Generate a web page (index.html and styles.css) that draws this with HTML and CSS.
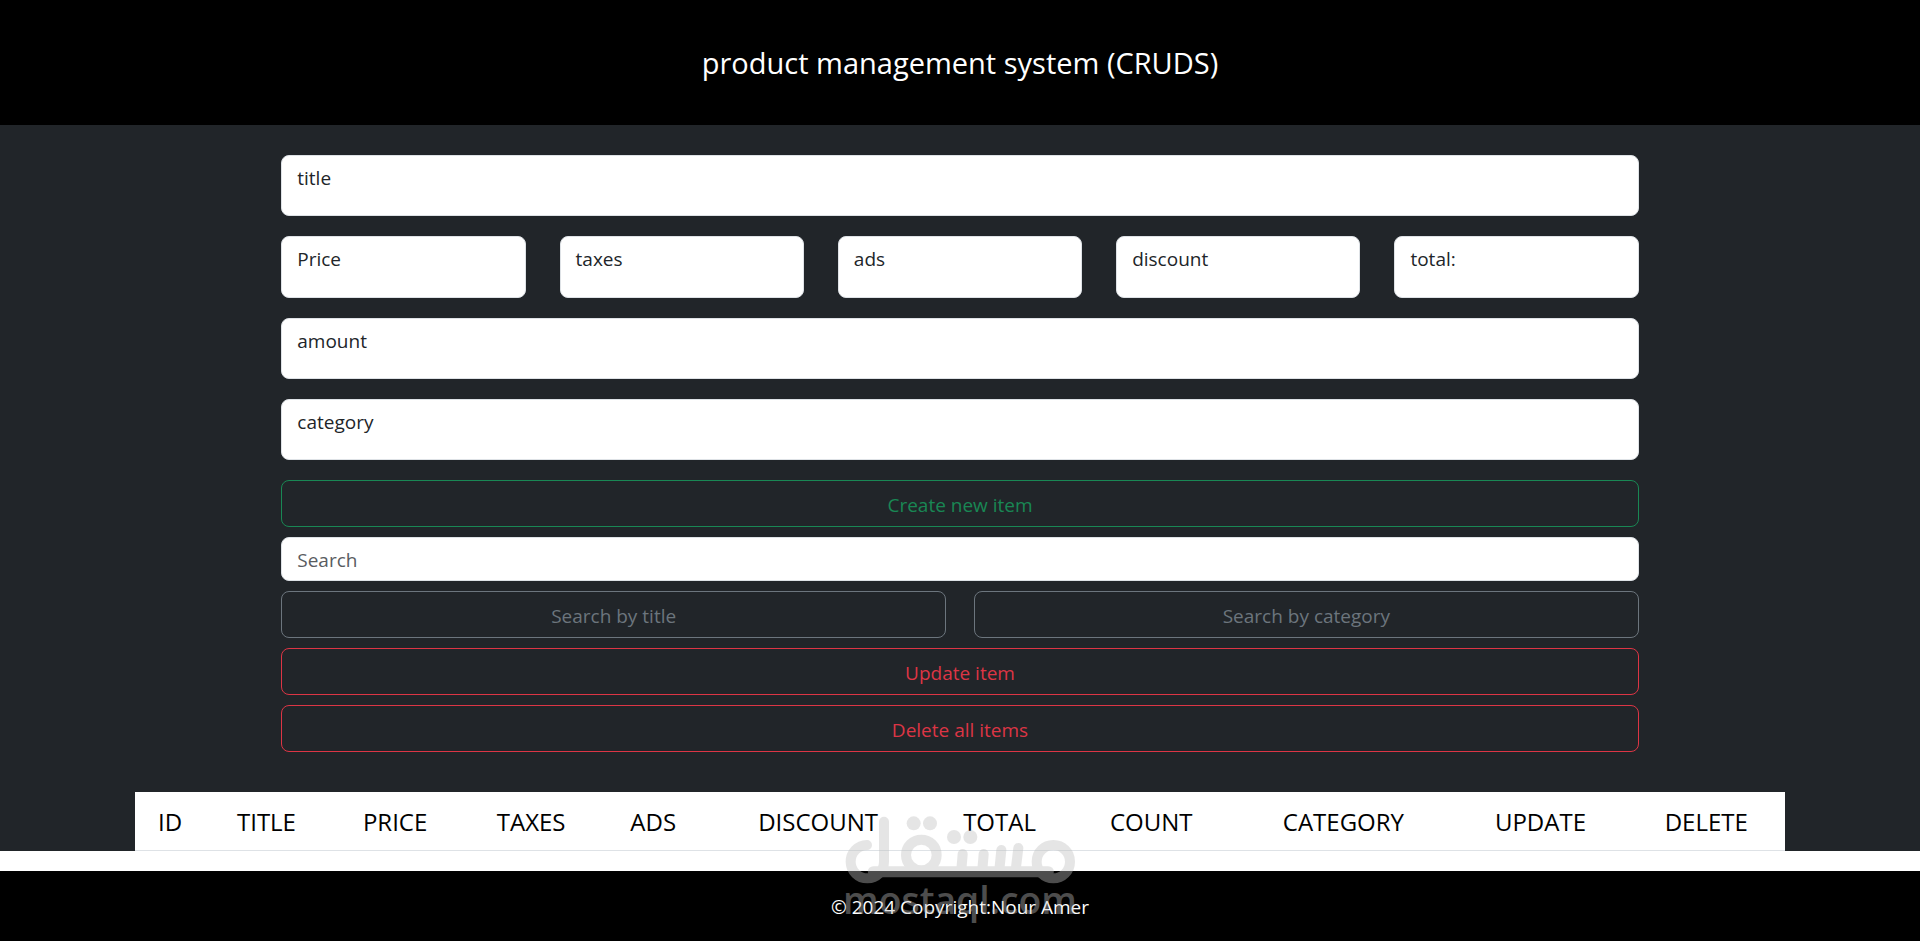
FILE: index.html
```html
<!DOCTYPE html>
<html lang="en">
<head>
    <meta charset="UTF-8">
    <meta name="viewport" content="width=device-width, initial-scale=1.0">
    <title>product management system (CRUDS)</title>
    <link rel="stylesheet" href="styles.css">
</head>
<body>
    <header class="page-header">
        <h1>product management system (CRUDS)</h1>
    </header>

    <main class="panel">
        <form class="product-form">
            <div class="field">
                <label for="title">title</label>
                <input type="text" id="title">
            </div>
            <div class="price-row">
                <div class="field">
                    <label for="price">Price</label>
                    <input type="text" id="price">
                </div>
                <div class="field">
                    <label for="taxes">taxes</label>
                    <input type="text" id="taxes">
                </div>
                <div class="field">
                    <label for="ads">ads</label>
                    <input type="text" id="ads">
                </div>
                <div class="field">
                    <label for="discount">discount</label>
                    <input type="text" id="discount">
                </div>
                <div class="field">
                    <label for="total">total:</label>
                    <input type="text" id="total" readonly>
                </div>
            </div>
            <div class="field">
                <label for="amount">amount</label>
                <input type="text" id="amount">
            </div>
            <div class="field">
                <label for="category">category</label>
                <input type="text" id="category">
            </div>

            <div class="actions">
                <button type="button" class="btn btn-success">Create new item</button>
                <input type="search" class="search" id="search" placeholder="Search" aria-label="Search">
                <div class="search-buttons">
                    <button type="button" class="btn btn-secondary">Search by title</button>
                    <button type="button" class="btn btn-secondary">Search by category</button>
                </div>
                <button type="button" class="btn btn-danger">Update item</button>
                <button type="button" class="btn btn-danger">Delete all items</button>
            </div>
        </form>

        <table class="products">
            <colgroup>
                <col class="col-id">
                <col class="col-title">
                <col class="col-price">
                <col class="col-taxes">
                <col class="col-ads">
                <col class="col-discount">
                <col class="col-total">
                <col class="col-count">
                <col class="col-category">
                <col class="col-update">
                <col class="col-delete">
            </colgroup>
            <thead>
                <tr>
                    <th>ID</th>
                    <th>TITLE</th>
                    <th>PRICE</th>
                    <th>TAXES</th>
                    <th>ADS</th>
                    <th>DISCOUNT</th>
                    <th>TOTAL</th>
                    <th>COUNT</th>
                    <th>CATEGORY</th>
                    <th>UPDATE</th>
                    <th>DELETE</th>
                </tr>
            </thead>
            <tbody id="tbody"></tbody>
        </table>
    </main>

    <footer class="page-footer">
        <p>© 2024 Copyright:Nour Amer</p>
        <!-- mostaql watermark -->
        <svg class="watermark" viewBox="435 105 690 330" aria-hidden="true">
            <g class="mark-lines">
                <path d="M501 195A50 50 0 1 0 552 245V125"/>
                <circle cx="664" cy="225" r="46"/>
                <circle cx="1060" cy="245" r="50"/>
                <path class="mark-bar" d="M520 275H1045"/>
                <path d="M788 222L784 270M851 222L847 270M904 210L898 270M955 204L947 270"/>
            </g>
            <g class="mark-dots">
                <circle cx="641" cy="130" r="21"/>
                <circle cx="690" cy="130" r="21"/>
                <circle cx="762" cy="171" r="21"/>
                <circle cx="811" cy="171" r="21"/>
            </g>
            <text class="mark-text" x="780" y="402" text-anchor="middle">mostaql.com</text>
        </svg>
    </footer>
</body>
</html>
```

FILE: styles.css
```css
* {
    box-sizing: border-box;
}

body {
    margin: 0;
    background-color: #fff;
    color: #212529;
    font-family: "Segoe UI", "Open Sans", sans-serif;
    font-size: 19px;
    line-height: 30px;
}

.page-header {
    padding: 40px 20px;
    background-color: #000;
    color: #fff;
    text-align: center;
}

.page-header h1 {
    margin: 0;
    font-size: 29px;
    font-weight: 400;
    line-height: 45px;
}

.panel {
    padding-top: 30px;
    background-color: #212529;
}

.product-form {
    display: flex;
    flex-direction: column;
    gap: 20px;
    width: 70.7%;
    margin: 0 auto 40px;
}

/* Fields */
.field {
    display: flex;
    flex-direction: column;
    height: 61px;
    padding: 7px 15px;
    background-color: #fff;
    border: 1px solid #dee2e6;
    border-radius: 8px;
}

.field input {
    width: 100%;
    height: 15px;
    padding: 0;
    border: 0;
    outline: 0;
    background: transparent;
    font: inherit;
}

.price-row {
    display: grid;
    grid-template-columns: repeat(5, 1fr);
    gap: 34px;
}

.price-row .field {
    height: 62px;
}

/* Buttons and search */
.actions {
    display: flex;
    flex-direction: column;
    gap: 10px;
}

.search-buttons {
    display: grid;
    grid-template-columns: 1fr 1fr;
    gap: 28px;
}

.btn {
    height: 47px;
    padding: 8px 15px 6px;
    background-color: transparent;
    border: 1px solid;
    border-radius: 8px;
    font: inherit;
    cursor: pointer;
}

.btn-success {
    color: #198754;
}

.btn-secondary {
    color: #6c757d;
}

.btn-danger {
    color: #dc3545;
}

.search {
    height: 44px;
    padding: 8px 15px 6px;
    background-color: #fff;
    border: 1px solid #dee2e6;
    border-radius: 8px;
    font: inherit;
    appearance: none;
}

.search::placeholder {
    color: #595c5f;
    opacity: 1;
}

/* Products table */
.products {
    width: 85.9%;
    margin: 0 auto;
    table-layout: fixed;
    border-collapse: separate;
    border-spacing: 0;
    background-color: #fff;
    color: #000;
    font-size: 24px;
}

.products th {
    height: 59px;
    padding: 9px 0 7px;
    border-bottom: 1px solid #dee2e6;
    font-weight: 400;
    text-align: center;
}

.col-id { width: 4.2%; }
.col-title { width: 7.5%; }
.col-price { width: 8.1%; }
.col-taxes { width: 8.4%; }
.col-ads { width: 6.4%; }
.col-discount { width: 13.6%; }
.col-total { width: 8.4%; }
.col-count { width: 10%; }
.col-category { width: 13.3%; }
.col-update { width: 10.6%; }
.col-delete { width: 9.5%; }

/* Footer */
.page-footer {
    position: relative;
    margin-top: 20px;
    padding: 21px 20px 19px;
    background-color: #000;
    color: #fff;
    text-align: center;
}

.page-footer p {
    margin: 0;
}

.watermark {
    position: absolute;
    left: 50%;
    bottom: 16px;
    width: 230px;
    height: 110px;
    margin-left: -115px;
    overflow: visible;
    opacity: 0.4;
    pointer-events: none;
}

.mark-lines {
    fill: none;
    stroke: #c0c0c0;
    stroke-width: 30;
    stroke-linecap: round;
}

.mark-bar {
    stroke-width: 33;
}

.mark-dots,
.mark-text {
    fill: #c0c0c0;
}

.mark-text {
    font-family: "Open Sans", sans-serif;
    font-size: 112px;
    font-weight: 600;
}
```
